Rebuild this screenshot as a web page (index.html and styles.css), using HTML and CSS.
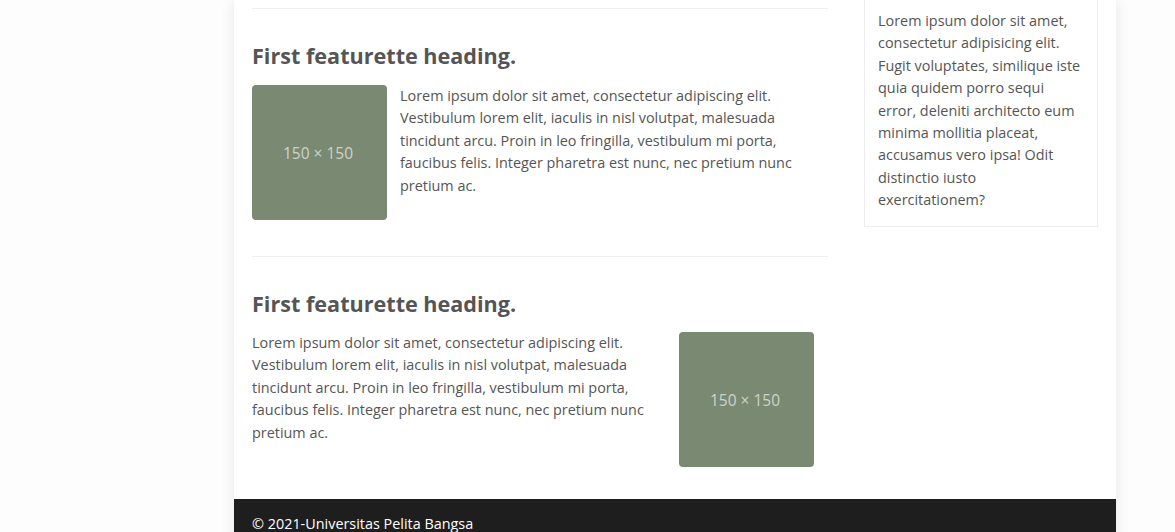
FILE: index.html
```html
<!DOCTYPE html>
<html lang="id">
<head>
<meta charset="utf-8">
<title>Universitas Pelita Bangsa</title>
<link rel="stylesheet" href="styles.css">
</head>
<body>
<div class="page">
  <div class="content">
    <main class="main">
      <section class="featurette">
        <hr class="divider">
        <h2 class="feat-title">First featurette heading.</h2>
        <div class="media">
          <div class="thumb">150 × 150</div>
          <p class="feat-text">Lorem ipsum dolor sit amet, consectetur adipiscing elit. Vestibulum lorem elit, iaculis in nisl volutpat, malesuada tincidunt arcu. Proin in leo fringilla, vestibulum mi porta, faucibus felis. Integer pharetra est nunc, nec pretium nunc pretium ac.</p>
        </div>
      </section>
      <section class="featurette featurette-alt">
        <hr class="divider">
        <h2 class="feat-title">First featurette heading.</h2>
        <div class="media media-right">
          <p class="feat-text">Lorem ipsum dolor sit amet, consectetur adipiscing elit. Vestibulum lorem elit, iaculis in nisl volutpat, malesuada tincidunt arcu. Proin in leo fringilla, vestibulum mi porta, faucibus felis. Integer pharetra est nunc, nec pretium nunc pretium ac.</p>
          <div class="thumb">150 × 150</div>
        </div>
      </section>
    </main>
    <aside class="sidebar">
      <p class="side-text">Lorem ipsum dolor sit amet, consectetur adipisicing elit. Fugit voluptates, similique iste quia quidem porro sequi error, deleniti architecto eum minima mollitia placeat, accusamus vero ipsa! Odit distinctio iusto exercitationem?</p>
    </aside>
  </div>
  <footer class="footer">© 2021-Universitas Pelita Bangsa</footer>
</div>
</body>
</html>
```
FILE: styles.css
```css
* { box-sizing: border-box; }
html, body { margin: 0; padding: 0; }
body {
  background: #fdfdfd;
  font-family: "Open Sans", "Noto Sans", sans-serif;
  font-size: 14.4px;
  color: #555;
  overflow: hidden;
}
.page {
  width: 882px;
  margin-left: 234px;
  background: #fff;
  box-shadow: 0 0 14px rgba(0,0,0,0.09);
}
.content {
  display: flex;
  align-items: flex-start;
  gap: 36px;
  padding: 0 18px 32px;
}
.main {
  width: 576px;
  padding-top: 8px;
}
.divider {
  margin: 0;
  border: 0;
  border-top: 1px solid #eeeeee;
  height: 0;
}
.featurette { padding-bottom: 36px; }
.featurette:last-child { padding-bottom: 0; }
.feat-title {
  margin: 34px 0 17px;
  font-size: 21.6px;
  line-height: 25px;
  font-weight: 700;
  color: #555;
}
.featurette-alt .feat-title { margin-bottom: 16px; }
.media {
  display: flex;
  align-items: flex-start;
  gap: 13px;
}
.media-right { padding-right: 14px; }
.media-right .feat-text { flex: 1; }
.thumb {
  flex: 0 0 135px;
  width: 135px;
  height: 135px;
  border-radius: 4px;
  background: #7a8972;
  color: #cdd3c9;
  font-size: 15.5px;
  display: flex;
  align-items: center;
  justify-content: center;
  padding-right: 3px;
}
.feat-text {
  margin: 0;
  line-height: 22.4px;
}
.sidebar {
  width: 234px;
  margin-top: -5px;
  border: 1px solid #eeeeee;
  padding: 14px 13px 14px;
}
.side-text {
  margin: 0;
  line-height: 22.4px;
}
.footer {
  background: #1e1e1e;
  color: #fff;
  padding: 15px 18px 20px;
  line-height: 20px;
  font-size: 14.4px;
}
```
